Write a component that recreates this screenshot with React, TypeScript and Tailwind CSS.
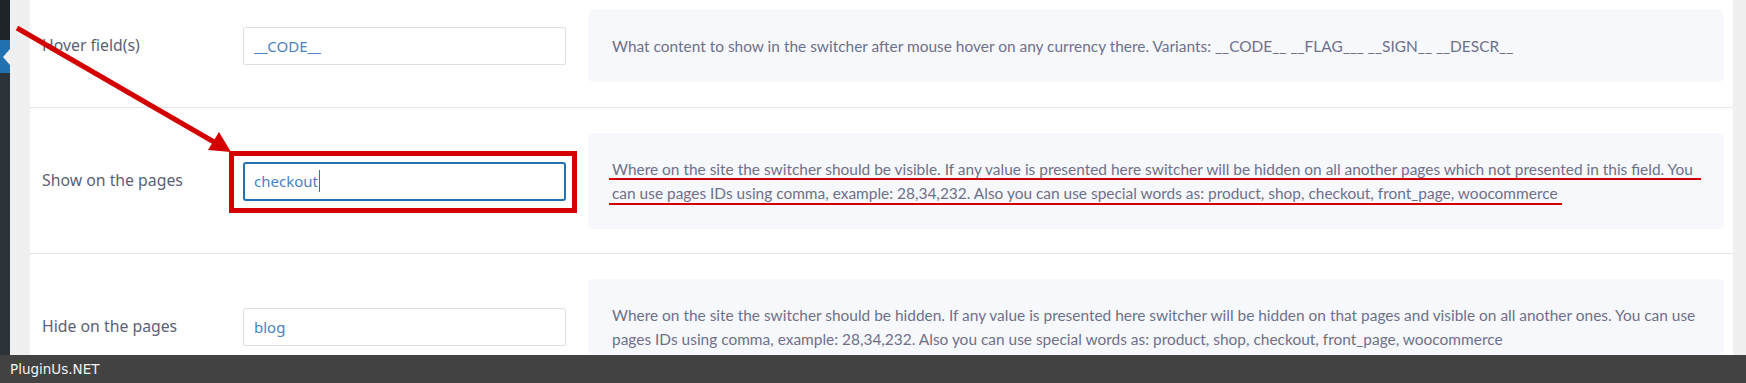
const desc = "font-['Lato',sans-serif] text-[15.45px] leading-[24px] text-[#6e7089]";
const label = "font-['Noto_Sans',sans-serif] text-[15.8px] text-[#5b6174]";

function Row({
  name,
  value,
  focused,
  text,
  className,
}: {
  name: string;
  value: string;
  focused?: boolean;
  text: React.ReactNode;
  className?: string;
}) {
  return (
    <div className={`flex items-center border-b border-[#e2e4e8] ${className ?? ""}`}>
      <div className={`w-[213px] shrink-0 pl-[12px] ${label}`}>{name}</div>
      <div
        className={
          focused
            ? "flex h-[39px] w-[323px] shrink-0 items-center rounded-[3px] border-2 border-[#2271b1] px-[9px]"
            : "flex h-[38px] w-[323px] shrink-0 items-center rounded-[2px] border border-[#dcdfe6] px-[10px]"
        }
      >
        <span className="font-['Noto_Sans',sans-serif] text-[15px] text-[#4a83c0]">{value}</span>
        {focused && <span className="ml-px h-[22px] w-px bg-[#3b6fa8]" />}
      </div>
      <div className={`ml-[22px] mr-[9px] flex-1 rounded-[5px] bg-[#f7f8fc] px-[24px] py-[24px] ${desc}`}>
        {text}
      </div>
    </div>
  );
}

export default function App() {
  return (
    <div className="relative flex h-[383px] w-[1746px] flex-col overflow-hidden bg-white">
      <div className="flex min-h-0 flex-1">
        {/* wp admin menu edge */}
        <div className="flex w-[10px] shrink-0 flex-col bg-[#2c3338]">
          <div className="h-[40px] bg-[#1d2327]" />
          <div className="flex h-[33px] items-center justify-end bg-[#2271b1]">
            <div className="h-0 w-0 border-y-[8px] border-r-[7px] border-y-transparent border-r-[#f0f0f1]" />
          </div>
        </div>
        <div className="w-[20px] shrink-0 bg-[#f0f0f1]" />

        <div className="min-w-0 flex-1 overflow-hidden bg-white">
          <Row
            className="pt-[10px] pb-[25px]"
            name="Hover field(s)"
            value="__CODE__"
            text="What content to show in the switcher after mouse hover on any currency there. Variants: __CODE__ __FLAG___ __SIGN__ __DESCR__"
          />
          <Row
            className="pt-[25px] pb-[24px]"
            name="Show on the pages"
            value="checkout"
            focused
            text="Where on the site the switcher should be visible. If any value is presented here switcher will be hidden on all another pages which not presented in this field. You can use pages IDs using comma, example: 28,34,232. Also you can use special words as: product, shop, checkout, front_page, woocommerce"
          />
          <Row
            className="pt-[25px] pb-[24px]"
            name="Hide on the pages"
            value="blog"
            text="Where on the site the switcher should be hidden. If any value is presented here switcher will be hidden on that pages and visible on all another ones. You can use pages IDs using comma, example: 28,34,232. Also you can use special words as: product, shop, checkout, front_page, woocommerce"
          />
        </div>
        <div className="w-[13px] shrink-0 bg-[#f0f0f1]" />
      </div>

      <div className="flex h-[28px] shrink-0 items-center bg-[#424242] pl-[10px] font-['DejaVu_Sans',sans-serif] text-[13.5px] text-[#f2f2f2]">
        PluginUs.NET
      </div>

      {/* annotations */}
      <svg className="pointer-events-none absolute left-0 top-0" width="1746" height="383">
        <line x1="17" y1="28" x2="214" y2="142" stroke="#d40000" strokeWidth="5" />
        <polygon points="231,152 208,150 219,132" fill="#d40000" />
        <rect x="231.5" y="153.5" width="343" height="57" fill="none" stroke="#d40000" strokeWidth="5" />
        <line x1="609" y1="179" x2="1701" y2="179" stroke="#d40000" strokeWidth="2" />
        <line x1="609" y1="204" x2="1562" y2="204" stroke="#d40000" strokeWidth="2" />
      </svg>
    </div>
  );
}
